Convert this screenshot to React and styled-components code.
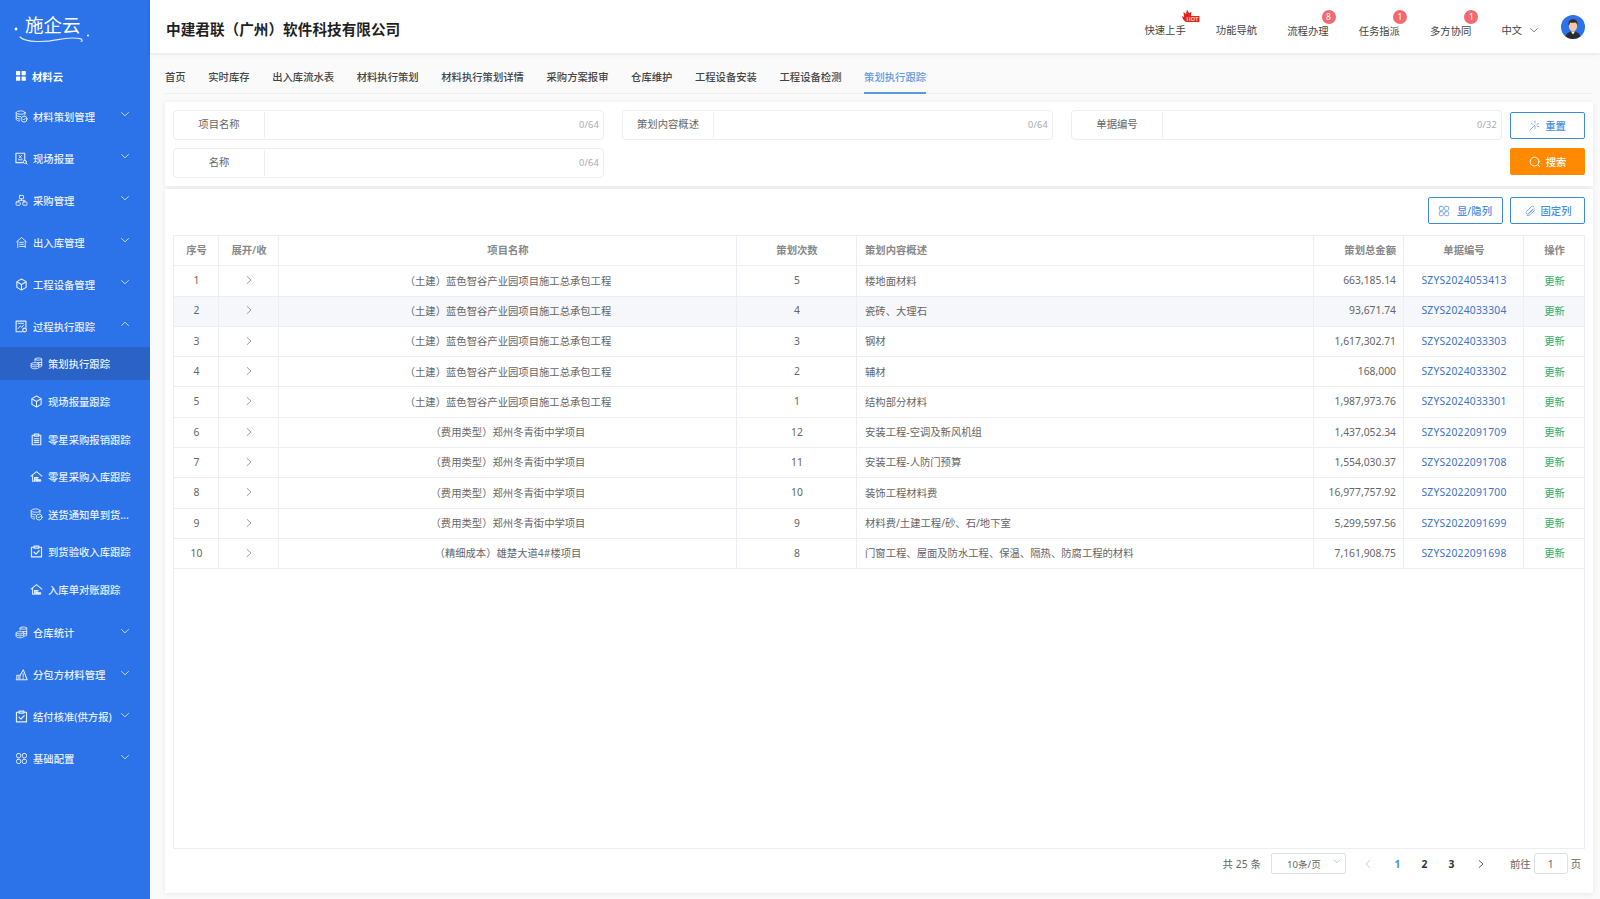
import React from "react";
import styled, { createGlobalStyle } from "styled-components";

const Global = createGlobalStyle`
  html, body { margin: 0; padding: 0; height: 100%; }
  body { font-family: "Noto Sans", "Noto Sans CJK SC", sans-serif; font-size: 10.33px; color: #606266; background: #fafafa; }
  #root { height: 100%; }
  * { box-sizing: border-box; }
`;

const Page = styled.div`display: flex; width: 1600px; height: 899px; overflow: hidden;`;
const Sidebar = styled.aside`width: 150px; flex: none; background: #2c72e8; color: #eaf2ff; display: flex; flex-direction: column;`;
const LogoBox = styled.div`height: 59px; flex: none; display: flex; justify-content: flex-start; padding: 0 0 0 14px;`;
const LogoInner = styled.div`position: relative; width: 80px; height: 59px;`;
const LogoText = styled.span`position: absolute; left: 11px; top: 11px; font-size: 18.5px; line-height: 26px; letter-spacing: 0; color: #fff; font-family: "Noto Sans CJK SC", sans-serif; white-space: nowrap;`;
const LogoArt = styled.svg`position: absolute; left: 0; top: 0;`;
const Root = styled.div`height: 34px; margin-bottom: 2px; flex: none; display: flex; align-items: center; gap: 6px; padding-left: 16px; font-weight: 700; color: #fff;`;
const MenuRow = styled.div`height: 42px; flex: none; display: flex; align-items: center; padding-left: 15px; color: #e6efff;`;
const MenuLabel = styled.span`margin-left: 5px; flex: 1; white-space: nowrap; font-weight: 500;`;
const Chev = styled.span`width: 30px; flex: none; display: flex; margin-top: -4px;`;
const SubRow = styled.div`
  height: ${p => p.$active ? 33 : 37.5}px; flex: none; display: flex; align-items: center; padding-left: 30px; color: #e6efff;
  background: ${p => p.$active ? "#2a62c6" : "transparent"};
  ${p => p.$active ? "margin-bottom: 3px; margin-top: 0;" : ""}
`;
const SubLabel = styled.span`margin-left: 5px; white-space: nowrap; font-weight: 500;`;
const SubGroup = styled.div`display: flex; flex-direction: column; margin-top: 0; margin-bottom: 3.5px;`;

const Main = styled.div`flex: 1; min-width: 0; display: flex; flex-direction: column;`;
const Header = styled.header`height: 53px; flex: none; background: #fff; box-shadow: 0 1px 4px rgba(0,0,0,.09); display: flex; align-items: center; padding: 0 15px 0 16px; position: relative; z-index: 2;`;
const Title = styled.h1`margin: 0; font-size: 14.65px; font-weight: 700; color: #1f1f1f; flex: 1; line-height: 20px; padding-top: 5px; font-family: "Noto Sans CJK SC", sans-serif;`;
const HeadItem = styled.div`position: relative; width: 41.3px; margin-right: 30.1px; white-space: nowrap; color: #444; line-height: 14px; padding-top: ${p => p.$low ? 8 : 7}px;`;
const Badge = styled.span`position: absolute; top: -6px; right: -7px; width: 14px; height: 14px; border-radius: 50%; background: #f26a6f; color: #fff; font-size: 8.5px; line-height: 14px; text-align: center;`;
const Hot = styled.svg`position: absolute; top: -7px; right: -15px;`;
const Lang = styled.div`display: flex; align-items: center; gap: 7px; color: #444; width: 59.6px; padding-top: 7px; line-height: 14px;`;
const Avatar = styled.svg`flex: none;`;

const Content = styled.div`flex: 1; min-height: 0; display: flex; flex-direction: column; padding: 0 7px 6px 15px;`;
const Tabs = styled.nav`height: 41px; flex: none; display: flex; gap: 22.6px; border-bottom: 1px solid #eeeff2; align-items: stretch;`;
const Tab = styled.div`
  position: relative; display: flex; align-items: center; white-space: nowrap; padding-top: 7px; font-weight: 500;
  color: ${p => p.$active ? "#5a9be0" : "#444"};
  ${p => p.$active ? "border-bottom: 2px solid #5a9be0; margin-bottom: -1px; padding-top: 8px;" : ""}
`;
const FilterCard = styled.section`height: 84px; margin-top: 8px; flex: none; background: #fff; box-shadow: 0 1px 6px rgba(0,0,0,.08); padding: 8px 8px 0; display: flex; gap: 8px;`;
const Fields = styled.div`flex: 1; display: grid; grid-template-columns: repeat(3, 431px); column-gap: 18px; row-gap: 8px; align-content: start;`;
const Field = styled.div`height: 30px; border: 1px solid #ebeef2; border-radius: 4px; display: flex; align-items: stretch;`;
const FieldLabel = styled.div`width: 91px; flex: none; border-right: 1px solid #ebeef2; display: flex; align-items: center; justify-content: center; color: #666; margin: 1px 0; padding-bottom: 3px;`;
const FieldInput = styled.div`flex: 1; display: flex; align-items: center; justify-content: flex-end; padding-right: 4px; padding-bottom: 2px; color: #a8abb2; font-size: 9.2px; letter-spacing: .2px;`;
const Buttons = styled.div`width: 75px; flex: none; display: flex; flex-direction: column; gap: 9px; padding-top: 2px;`;
const Btn = styled.div`
  width: 75px; height: 27px; flex: none; border-radius: 2px; display: flex; align-items: center; justify-content: center; gap: 5px; font-weight: 500;
  border: 1px solid ${p => p.$solid ? "#ff8a00" : "#3f8ad8"};
  background: ${p => p.$solid ? "#ff8a00" : "#fff"};
  color: ${p => p.$solid ? "#fff" : "#4a8ee0"};
`;
const WideBtn = styled(Btn)`gap: 7px; padding-right: 1px;`;
const TableCard = styled.section`flex: 1; min-height: 0; margin-top: 3px; background: #fff; box-shadow: 0 1px 6px rgba(0,0,0,.08); padding: 8px 8px 0; display: flex; flex-direction: column;`;
const Toolbar = styled.div`height: 27px; flex: none; display: flex; justify-content: flex-end; gap: 7px; margin-bottom: 11px;`;
const TableWrap = styled.div`height: 614px; flex: none; border: 1px solid #ebeef2;`;
const Row = styled.div`
  display: grid; grid-template-columns: 45px 60px 458px 120px 457px 90px 120px 1fr; height: 30.3px;
  border-bottom: 1px solid #ebeef2;
  background: ${p => p.$hover ? "#f5f7fa" : "#fff"};
`;
const Cell = styled.div`
  display: flex; align-items: center; padding: 0 7px 1.6px 8px; white-space: nowrap; border-right: 1px solid #ebeef2; min-width: 0;
  justify-content: ${p => p.$align || "flex-start"};
  color: ${p => p.$color || "#666"};
  font-weight: ${p => p.$head ? 600 : 400};
  ${p => p.$head ? "color: #888;" : ""}
  ${p => p.$code ? "letter-spacing: .22px; font-weight: 400;" : ""}
  &:last-child { border-right: none; }
`;
const Pager = styled.div`flex: 1; display: flex; align-items: center; padding-bottom: 15px; position: relative; justify-content: flex-end; color: #666;`;
const Total = styled.span`margin-right: 10px; letter-spacing: .1px;`;
const Select = styled.div`width: 75px; height: 21px; border: 1px solid #dcdfe6; border-radius: 2px; position: relative; display: flex; align-items: center; padding-left: 15px; margin-right: 6px; font-size: 9.6px;`;
const SelectArrow = styled.svg`position: absolute; right: 3px; top: 2px;`;
const PageNum = styled.span`width: 27px; text-align: center; font-weight: 700; color: ${p => p.$active ? "#4a90e2" : "#333"};`;
const PageArrow = styled.span`width: 32px; display: flex; justify-content: center;`;
const Goto = styled.span`margin-left: 13px;`;
const GotoInput = styled.div`width: 34px; height: 21px; border: 1px solid #dcdfe6; border-radius: 3px; margin: 0 3px; display: flex; align-items: center; justify-content: center;`;
const GotoEnd = styled.span`margin-right: 4px;`;
const IconTone = styled.span`display: flex; color: #6b9fe6;`;

const S = { fill: "none", stroke: "currentColor", strokeWidth: 1, strokeLinecap: "round", strokeLinejoin: "round" };
const Ico = ({ size = 13, children, ...r }) => <svg width={size} height={size} viewBox="0 0 14 14" style={{ flex: "none" }} {...S} {...r}>{children}</svg>;

const IDbCheck = () => <Ico><ellipse cx="6" cy="2.8" rx="4.7" ry="1.8" /><path d="M1.3 2.8v7.2c0 1 2 1.8 3.6 1.8M10.7 2.8v2.6M1.3 5.4c0 1 2.2 1.8 4.7 1.8M1.3 8c0 .9 1.8 1.6 3.5 1.7" /><circle cx="9.8" cy="9.8" r="3.2" /><path d="M8.4 9.8l1 1 1.7-1.8" /></Ico>;
const IDocX = () => <Ico><path d="M10.5 9V1.3H1v10.2h7" strokeWidth="1.2" /><path d="M4.3 3.6l2.8 3M7.1 3.6l-2.8 3M3.8 8.4h4" /><circle cx="10.6" cy="10.6" r="1.7" /><path d="M11.9 11.9l1.2 1.2" /></Ico>;
const INetwork = () => <Ico><rect x="4.8" y="1.5" width="4.4" height="3.6" rx=".6" /><rect x="1.2" y="8.5" width="4.4" height="3.6" rx=".6" /><rect x="8.4" y="8.5" width="4.4" height="3.6" rx=".6" /><path d="M7 5.1v1.7M3.4 8.5V6.8h7.2v1.7" /></Ico>;
const IHouse = () => <Ico><path d="M1.8 6.2L7 1.6l5.2 4.6M3 5.6v6.8M11 5.6v6.8" /><path d="M5 6.8h4M5 9h4M5 11.3h6" /></Ico>;
const IBox = () => <Ico><path d="M7 1.2l5 2.7v6.2l-5 2.7-5-2.7V3.9z" strokeWidth="1.2" /><path d="M2.4 4.3L7 7l4.6-2.7M7 7v5.4" strokeWidth="1.1" /></Ico>;
const IProcess = () => <Ico><path d="M8 12.6H1.2V1.2h10.6v6.6" strokeWidth="1.2" /><path d="M3.4 9.2l2.4-2.8 1.6 1.5 2-2.6" /><circle cx="10.3" cy="10.8" r="2" strokeWidth="1.2" /><path d="M3.2 3.6h6" /></Ico>;
const IStack = () => <Ico><path d="M5.4 4.6V2.2c0-.6 1.6-1.1 3.6-1.1s3.6.5 3.6 1.1v7.6c0 .5-1 .9-2.2 1M5.4 2.4c0 .6 1.6 1 3.6 1s3.6-.4 3.6-1M8 6h4.6M10 8.3h2.6" /><path d="M1.2 7.3c0-.7 1.9-1.2 4.1-1.2s4.1.5 4.1 1.2v4.2c0 .7-1.9 1.2-4.1 1.2s-4.1-.5-4.1-1.2zM1.2 9.4c0 .7 1.9 1.2 4.1 1.2s4.1-.5 4.1-1.2M1.2 7.3c0 .7 1.9 1.2 4.1 1.2s4.1-.5 4.1-1.2" /></Ico>;
const IClip = () => <Ico strokeWidth="1.2"><path d="M4.6 2.4H2.4v10.2h9.2V2.4H9.4" /><rect x="4.6" y="1.2" width="4.8" height="2.2" /><path d="M4.6 6.2h4.8M4.6 8.2h4.8M4.6 10.2h4.8" /></Ico>;
const IWare = () => <Ico><path d="M1.2 6.6L7 1.8l5.8 4.8M2.8 6v6h2V8.2h4" strokeWidth="1.1" /><path d="M6 9.4h2.2v2.6H6zM8.6 10.4h3V12h-3z" fill="currentColor" /></Ico>;
const IClipCheck = () => <Ico strokeWidth="1.3"><path d="M4.4 2.4H1.6v10.4h10.8V2.4H9.6" /><rect x="4.4" y="1.1" width="5.2" height="2.2" /><path d="M4.4 7.8l2 2 3.4-3.6" /></Ico>;
const ITri = () => <Ico><path d="M1.2 12.6h11.8M2 12.4V7.8h4M9 2L13 12.4M9 2L5.6 7.8" strokeWidth="1.1" /><path d="M3.6 9.6h2M3.6 11h2M8.8 6v3.6M8.8 11v.5" /></Ico>;
const IGrid = ({ size = 13, r = 1.8 }) => <Ico size={size}><rect x="1.6" y="1.6" width="4.6" height="4.6" rx={r} /><rect x="7.8" y="1.6" width="4.6" height="4.6" rx={r} /><rect x="1.6" y="7.8" width="4.6" height="4.6" rx={r} /><rect x="7.8" y="7.8" width="4.6" height="4.6" rx={r} /></Ico>;
const ISolidGrid = () => <svg width="10" height="10" viewBox="0 0 10 10" fill="#fff"><rect width="4.2" height="4.2" rx=".6" /><rect x="5.6" width="4.2" height="4.2" rx=".6" /><rect y="5.6" width="4.2" height="4.2" rx=".6" /><rect x="5.6" y="5.6" width="4.2" height="4.2" rx=".6" /></svg>;
const Chevron = ({ up, color = "#cfe0ff", size = 10 }) => <svg width={size} height={size} viewBox="0 0 10 10" fill="none" stroke={color} strokeWidth=".9" strokeLinecap="round" strokeLinejoin="round"><path d={up ? "M1.5 6.5L5 3.2l3.5 3.3" : "M1.5 3.5L5 6.8l3.5-3.3"} /></svg>;
const Right = ({ color = "#909399" }) => <svg width="10" height="10" viewBox="0 0 10 10" fill="none" stroke={color} strokeWidth=".9" strokeLinecap="round" strokeLinejoin="round"><path d="M3.2 1.5L7 5 3.2 8.5" /></svg>;
const Left = ({ color = "#c0c4cc" }) => <svg width="10" height="10" viewBox="0 0 10 10" fill="none" stroke={color} strokeWidth=".9" strokeLinecap="round" strokeLinejoin="round"><path d="M6.8 1.5L3 5l3.8 3.5" /></svg>;

const menusTop = [
  ["材料策划管理", IDbCheck], ["现场报量", IDocX], ["采购管理", INetwork], ["出入库管理", IHouse], ["工程设备管理", IBox],
];
const subs = [
  ["现场报量跟踪", IBox], ["零星采购报销跟踪", IClip], ["零星采购入库跟踪", IWare], ["送货通知单到货...", IDbCheck], ["到货验收入库跟踪", IClipCheck], ["入库单对账跟踪", IWare],
];
const menusBottom = [
  ["仓库统计", IStack], ["分包方材料管理", ITri], ["结付核准(供方报)", IClipCheck], ["基础配置", IGrid],
];
const tabs = ["首页", "实时库存", "出入库流水表", "材料执行策划", "材料执行策划详情", "采购方案报审", "仓库维护", "工程设备安装", "工程设备检测"];
const P1 = "（土建）蓝色智谷产业园项目施工总承包工程", P2 = "（费用类型）郑州冬青街中学项目";
const rows = [
  [P1, 5, "楼地面材料", "663,185.14", "SZYS2024053413"],
  [P1, 4, "瓷砖、大理石", "93,671.74", "SZYS2024033304"],
  [P1, 3, "钢材", "1,617,302.71", "SZYS2024033303"],
  [P1, 2, "辅材", "168,000", "SZYS2024033302"],
  [P1, 1, "结构部分材料", "1,987,973.76", "SZYS2024033301"],
  [P2, 12, "安装工程-空调及新风机组", "1,437,052.34", "SZYS2022091709"],
  [P2, 11, "安装工程-人防门预算", "1,554,030.37", "SZYS2022091708"],
  [P2, 10, "装饰工程材料费", "16,977,757.92", "SZYS2022091700"],
  [P2, 9, "材料费/土建工程/砂、石/地下室", "5,299,597.56", "SZYS2022091699"],
  ["（精细成本）雄楚大道4#楼项目", 8, "门窗工程、屋面及防水工程、保温、隔热、防腐工程的材料", "7,161,908.75", "SZYS2022091698"],
];

const Menu = ({ label, I, up }) => (
  <MenuRow><I /><MenuLabel>{label}</MenuLabel><Chev><Chevron up={up} /></Chev></MenuRow>
);

export default function App() {
  return (
    <Page>
      <Global />
      <Sidebar>
        <LogoBox>
          <LogoInner>
            <LogoArt width="80" height="59" viewBox="0 0 80 59" fill="none">
              <circle cx="2" cy="29" r="1.4" fill="#fff" />
              <path d="M6 37c6 6 26 5 38 2.6 8-1.6 14-2.4 22-1 3 .5 2.5 3 1 2.6" stroke="#dfeaff" strokeWidth="1.1" strokeLinecap="round" />
              <circle cx="74" cy="35.5" r=".9" fill="#fff" />
            </LogoArt>
            <LogoText>施企云</LogoText>
          </LogoInner>
        </LogoBox>
        <Root><ISolidGrid />材料云</Root>
        {menusTop.map(([l, I]) => <Menu key={l} label={l} I={I} />)}
        <Menu label="过程执行跟踪" I={IProcess} up />
        <SubGroup>
          <SubRow $active><IStack /><SubLabel>策划执行跟踪</SubLabel></SubRow>
          {subs.map(([l, I]) => <SubRow key={l}><I /><SubLabel>{l}</SubLabel></SubRow>)}
        </SubGroup>
        {menusBottom.map(([l, I]) => <Menu key={l} label={l} I={I} />)}
      </Sidebar>
      <Main>
        <Header>
          <Title>中建君联（广州）软件科技有限公司</Title>
          <HeadItem>快速上手
            <Hot width="20" height="14" viewBox="0 0 20 14">
              <path d="M1 7L3 8 2.5 3 5 5 6 .5 8 4l2.5-1L10 7h8.5v6H5C3 12 1.5 10 1 7z" fill="#e1251b" />
              <text x="5.6" y="11.6" fontSize="5.6" fontWeight="700" fill="#fff" fontFamily="Liberation Sans" stroke="#c1150f" strokeWidth=".2">HOT</text>
            </Hot>
          </HeadItem>
          <HeadItem>功能导航</HeadItem>
          <HeadItem $low>流程办理<Badge>8</Badge></HeadItem>
          <HeadItem $low>任务指派<Badge>1</Badge></HeadItem>
          <HeadItem $low>多方协同<Badge>1</Badge></HeadItem>
          <Lang>中文<Chevron color="#777" /></Lang>
          <Avatar width="24" height="24" viewBox="0 0 24 24">
            <circle cx="12" cy="12" r="12" fill="#2c72e8" />
            <path d="M4.5 21.5c1-3.6 4-5 7.5-5s6.5 1.4 7.5 5A12 12 0 0 1 12 24a12 12 0 0 1-7.5-2.5z" fill="#2b2b33" />
            <path d="M10 16.5l2 3 2-3z" fill="#fff" />
            <ellipse cx="12" cy="11" rx="4.2" ry="5.4" fill="#f2c8a8" />
            <path d="M7.5 10.5C7 6 9.5 4.2 12.2 4.2c3 0 4.8 2.2 4.3 6.3-.6-2-1.3-2.8-2.4-3-1.8.5-3.8.4-5 .1-.4.8-.5 1.7-1.1 2.9z" fill="#3a2a22" />
          </Avatar>
        </Header>
        <Content>
          <Tabs>
            {tabs.map(t => <Tab key={t}>{t}</Tab>)}
            <Tab $active>策划执行跟踪</Tab>
          </Tabs>
          <FilterCard>
            <Fields>
              {[["项目名称", "0/64"], ["策划内容概述", "0/64"], ["单据编号", "0/32"], ["名称", "0/64"]].map(([l, c]) => (
                <Field key={l}><FieldLabel>{l}</FieldLabel><FieldInput>{c}</FieldInput></Field>
              ))}
            </Fields>
            <Buttons>
              <Btn>
                <svg width="11" height="11" viewBox="0 0 11 11" fill="none" stroke="#7fa8e4" strokeWidth=".9" strokeLinecap="round"><path d="M1 10l4.6-4.6M6 1v2M6 6.6v2M2.4 3.4L4 4.4M9.6 3.4L8 4.4M8 6l1.8.6" /></svg>
                重置
              </Btn>
              <Btn $solid>
                <svg width="12" height="12" viewBox="0 0 12 12" fill="none" stroke="#fff" strokeWidth="1" strokeLinecap="round"><circle cx="5.6" cy="5.6" r="4.4" /><path d="M9 9l1.6 1.6" /></svg>
                搜索
              </Btn>
            </Buttons>
          </FilterCard>
          <TableCard>
            <Toolbar>
              <WideBtn><IconTone><IGrid size={12} r={1} /></IconTone>显/隐列</WideBtn>
              <Btn>
                <IconTone><svg width="12" height="12" viewBox="0 0 12 12" fill="none" stroke="currentColor" strokeWidth=".9" strokeLinecap="round"><path d="M10 3.6L5 8.6c-.8.8-2 .8-2.6.1s-.4-1.7.3-2.4L7 2c1-1 2.4-1 3 0M8.6 4.4L4.6 8.4M3 10.4c1.2.6 2.3.2 3.2-.7l4.4-4.4" /></svg></IconTone>
                固定列
              </Btn>
            </Toolbar>
            <TableWrap>
              <Row>
                <Cell $head $align="center">序号</Cell>
                <Cell $head $align="center">展开/收</Cell>
                <Cell $head $align="center">项目名称</Cell>
                <Cell $head $align="center">策划次数</Cell>
                <Cell $head>策划内容概述</Cell>
                <Cell $head $align="flex-end">策划总金额</Cell>
                <Cell $head $align="center">单据编号</Cell>
                <Cell $head $align="center">操作</Cell>
              </Row>
              {rows.map((r, i) => (
                <Row key={r[4]} $hover={i === 1}>
                  <Cell $align="center">{i + 1}</Cell>
                  <Cell $align="center"><Right /></Cell>
                  <Cell $align="center">{r[0]}</Cell>
                  <Cell $align="center">{r[1]}</Cell>
                  <Cell>{r[2]}</Cell>
                  <Cell $align="flex-end">{r[3]}</Cell>
                  <Cell $align="center" $color="#3d73c9" $code>{r[4]}</Cell>
                  <Cell $align="center" $color="#2fb06a">更新</Cell>
                </Row>
              ))}
            </TableWrap>
            <Pager>
              <Total>共 25 条</Total>
              <Select>10条/页<SelectArrow width="10" height="10" viewBox="0 0 10 10" fill="none" stroke="#c0c4cc" strokeWidth=".9"><path d="M1.5 3.5L5 6.8l3.5-3.3" /></SelectArrow></Select>
              <PageArrow><Left /></PageArrow>
              <PageNum $active>1</PageNum>
              <PageNum>2</PageNum>
              <PageNum>3</PageNum>
              <PageArrow><Right color="#555" /></PageArrow>
              <Goto>前往</Goto>
              <GotoInput>1</GotoInput>
              <GotoEnd>页</GotoEnd>
            </Pager>
          </TableCard>
        </Content>
      </Main>
    </Page>
  );
}
